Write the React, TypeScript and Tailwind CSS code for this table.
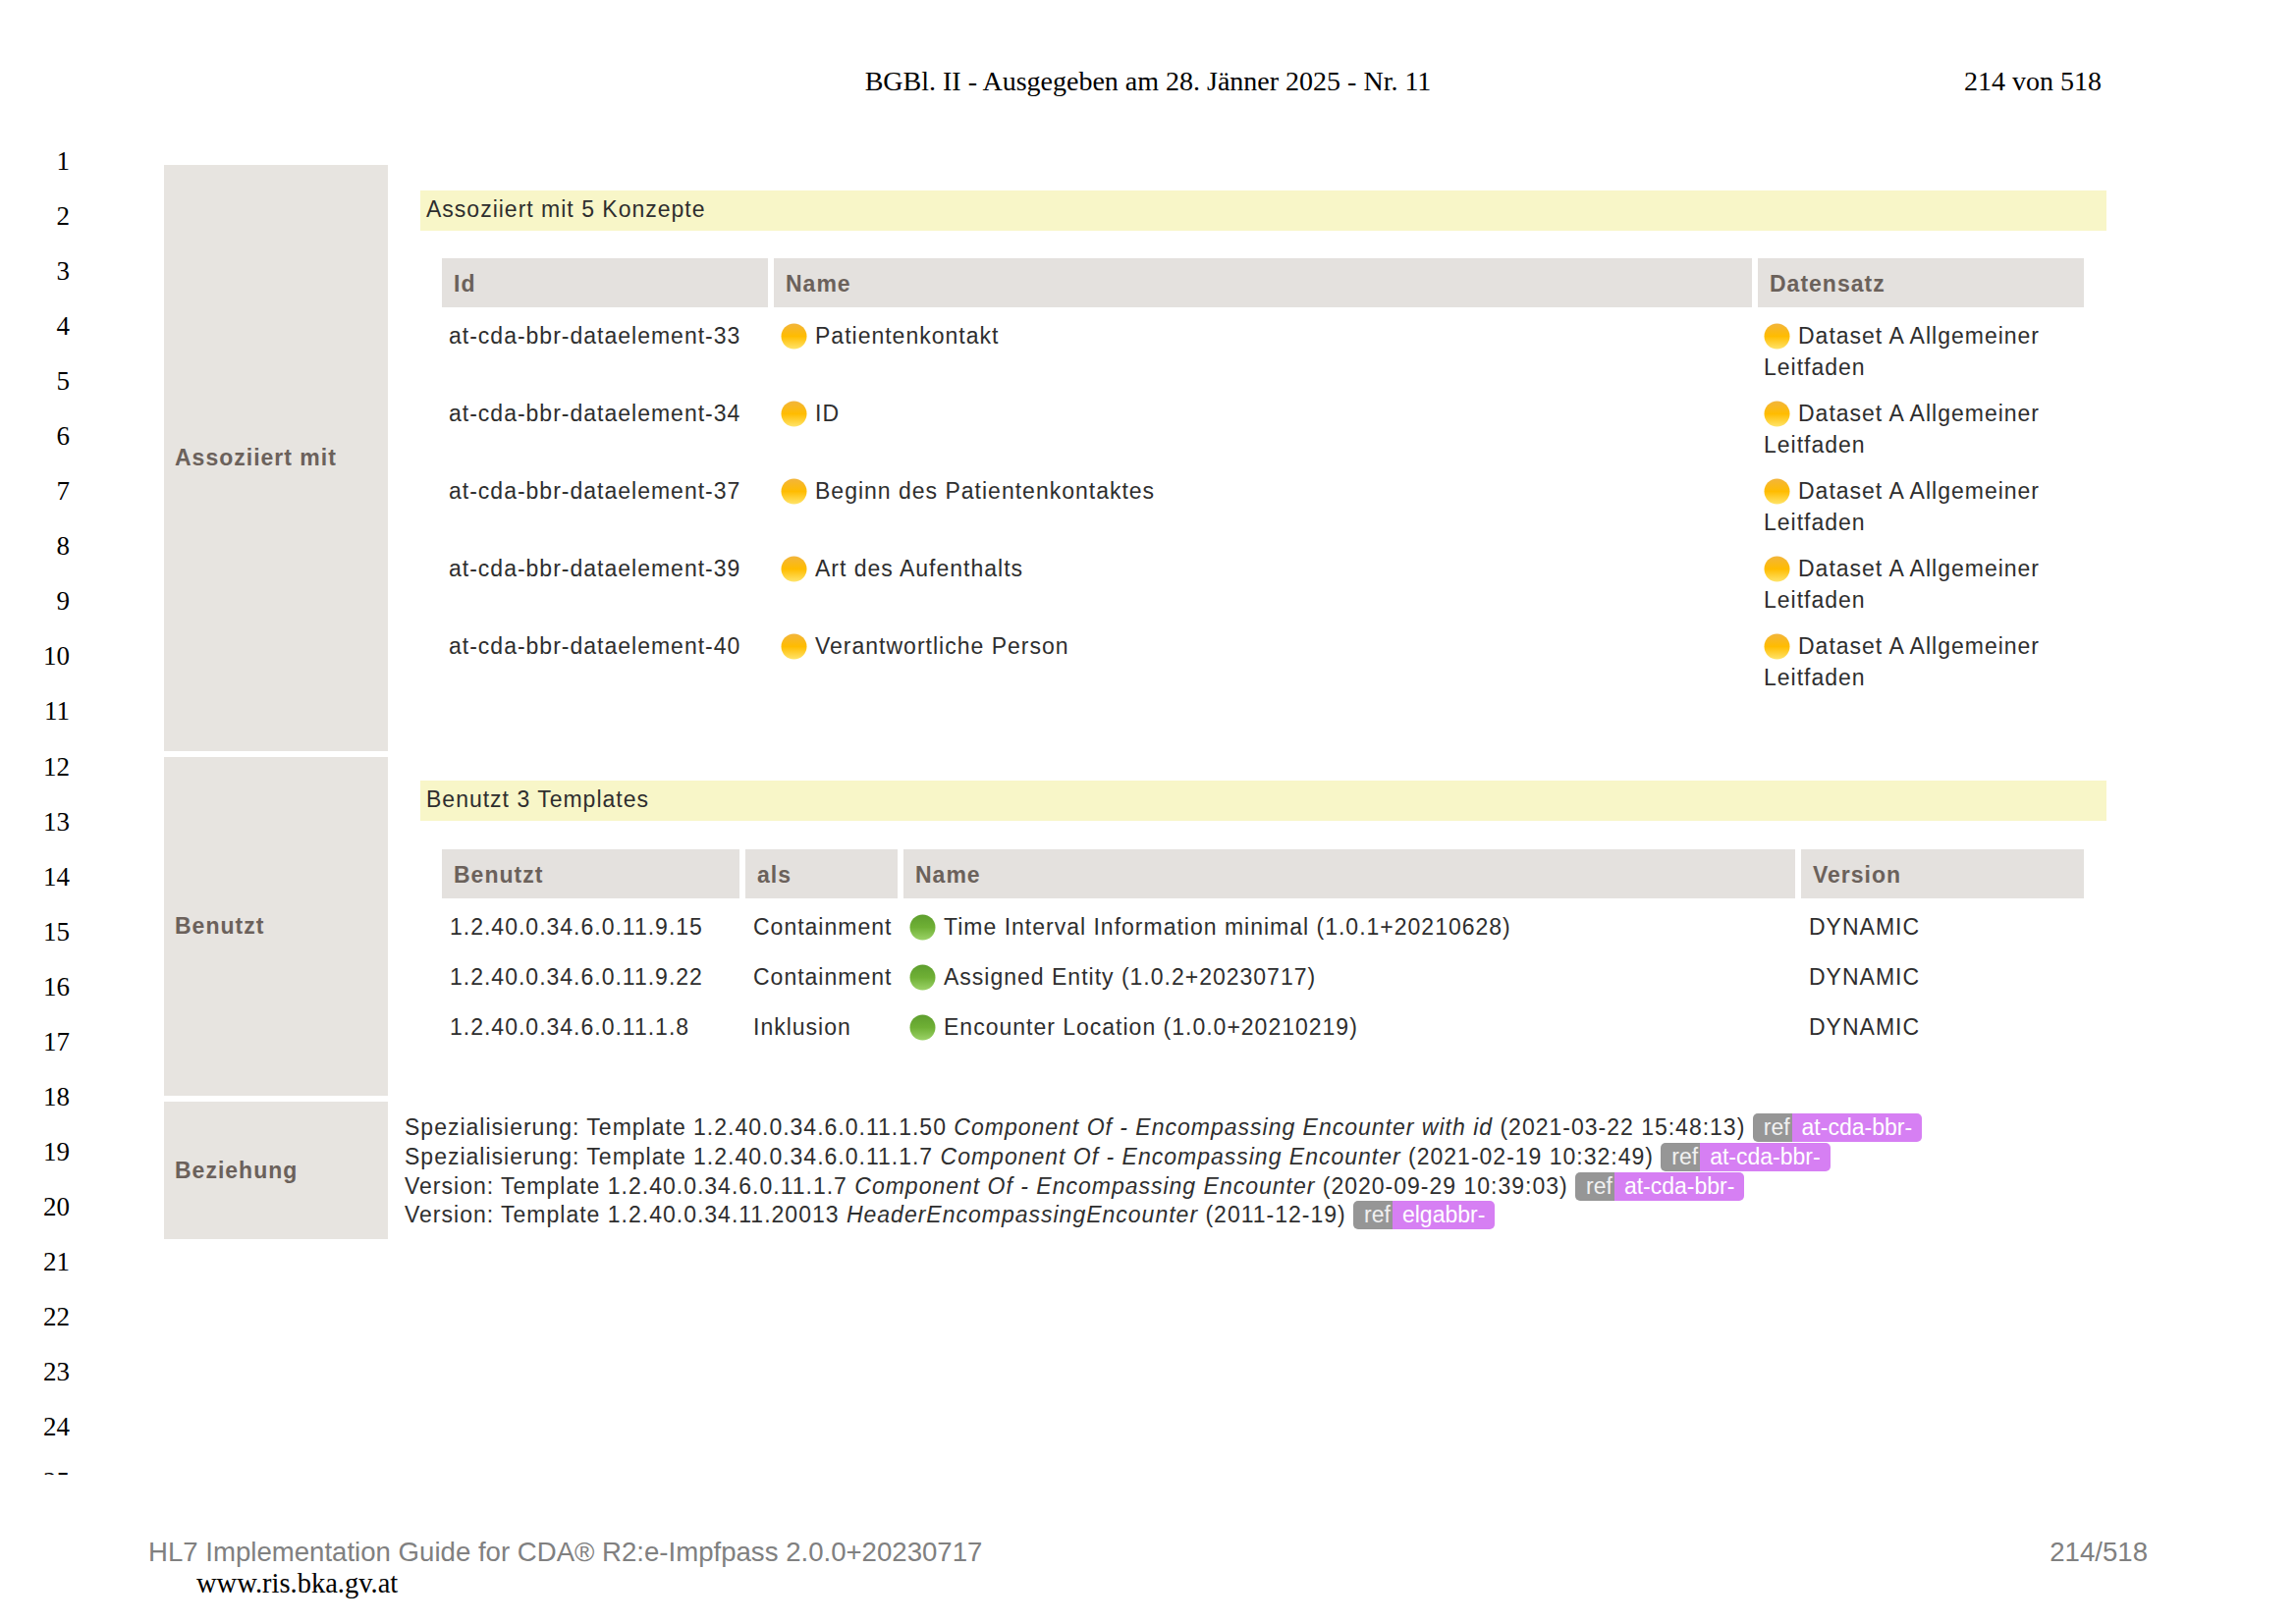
import React from 'react';

const sans = "font-['Liberation_Sans',Arial,sans-serif]";
const serif = "font-['Liberation_Serif','Times_New_Roman',serif]";

const Dot = ({ kind }: { kind: 'yellow' | 'green' }) => {
  const id = kind === 'yellow' ? 'dot-y' : 'dot-g';
  const stops =
    kind === 'yellow'
      ? ['#f2b53c', '#ffbc00', '#ffe46a']
      : ['#5e9e2e', '#6fb035', '#9bd267'];
  return (
    <svg width="27" height="27" viewBox="0 0 27 27" className="inline-block align-middle mr-[8px] -mt-[3px]">
      <defs>
        <linearGradient id={id} x1="0" y1="0" x2="0" y2="1">
          <stop offset="0%" stopColor={stops[0]} />
          <stop offset="50%" stopColor={stops[1]} />
          <stop offset="100%" stopColor={stops[2]} />
        </linearGradient>
      </defs>
      <circle cx="13.5" cy="13.5" r="13" fill={`url(#${id})`} />
    </svg>
  );
};

const Badge = ({ label }: { label: string }) => (
  <span className="inline-flex rounded-[5px] overflow-hidden leading-[29px] tracking-normal text-white">
    <span className="bg-[#969696] pl-[11px] pr-[2px] text-[#f1f1f1]">ref</span>
    <span className="bg-[#d67ff3] px-[10px]">{label}</span>
  </span>
);

const Section = ({ label, children, className }: { label: string; children: React.ReactNode; className: string }) => (
  <div className="flex gap-[6px]">
    <div className="w-[228px] shrink-0 bg-[#e7e4e0] flex items-center pl-[11px] font-bold text-[#6b615b]">{label}</div>
    <div className={`flex-1 pl-[11px] ${className}`}>{children}</div>
  </div>
);

const Bar = ({ text }: { text: string }) => (
  <div className="ml-[16px] mr-[5px] h-[41px] leading-[39px] pl-[6px] bg-[#f8f6c8]">{text}</div>
);

const Th = ({ text }: { text: string }) => (
  <div className="bg-[#e4e1de] h-[50px] leading-[52px] pl-[12px] font-bold text-[#6b615b]">{text}</div>
);

const concepts = [
  ['at-cda-bbr-dataelement-33', 'Patientenkontakt'],
  ['at-cda-bbr-dataelement-34', 'ID'],
  ['at-cda-bbr-dataelement-37', 'Beginn des Patientenkontaktes'],
  ['at-cda-bbr-dataelement-39', 'Art des Aufenthalts'],
  ['at-cda-bbr-dataelement-40', 'Verantwortliche Person'],
];

const templates = [
  ['1.2.40.0.34.6.0.11.9.15', 'Containment', 'Time Interval Information minimal (1.0.1+20210628)'],
  ['1.2.40.0.34.6.0.11.9.22', 'Containment', 'Assigned Entity (1.0.2+20230717)'],
  ['1.2.40.0.34.6.0.11.1.8', 'Inklusion', 'Encounter Location (1.0.0+20210219)'],
];

const relations = [
  ['Spezialisierung: Template 1.2.40.0.34.6.0.11.1.50 ', 'Component Of - Encompassing Encounter with id', ' (2021-03-22 15:48:13) ', 'at-cda-bbr-'],
  ['Spezialisierung: Template 1.2.40.0.34.6.0.11.1.7 ', 'Component Of - Encompassing Encounter', ' (2021-02-19 10:32:49) ', 'at-cda-bbr-'],
  ['Version: Template 1.2.40.0.34.6.0.11.1.7 ', 'Component Of - Encompassing Encounter', ' (2020-09-29 10:39:03) ', 'at-cda-bbr-'],
  ['Version: Template 1.2.40.0.34.11.20013 ', 'HeaderEncompassingEncounter', ' (2011-12-19) ', 'elgabbr-'],
];

export default function App() {
  return (
    <div className="w-[2338px] h-[1653px] bg-white overflow-hidden text-black">
      {/* Kopfzeile */}
      <div className={`grid grid-cols-[1fr_auto_1fr] pt-[68px] text-[28px] leading-[30px] ${serif}`}>
        <div />
        <div>BGBl. II - Ausgegeben am 28. Jänner 2025 - Nr. 11</div>
        <div className="text-right pr-[198px]">214 von 518</div>
      </div>

      <div className="flex mt-[38px]">
        {/* Zeilennummern */}
        <div className={`w-[71px] shrink-0 h-[1366px] overflow-hidden text-right text-[27px] leading-[56.05px] ${serif}`}>
          {Array.from({ length: 25 }, (_, i) => (
            <div key={i}>{i + 1}</div>
          ))}
        </div>

        <div className={`ml-[96px] mt-[32px] w-[1983px] flex flex-col gap-[6px] text-[23px] tracking-[1px] text-[#2e2e2e] ${sans}`}>
          <Section label="Assoziiert mit" className="pt-[26px] pb-[57px]">
            <Bar text="Assoziiert mit 5 Konzepte" />
            <div className="mt-[28px] ml-[38px] grid grid-cols-[332px_996px_332px] gap-[6px]">
              <Th text="Id" />
              <Th text="Name" />
              <Th text="Datensatz" />
              {concepts.map(([id, name]) => (
                <React.Fragment key={id}>
                  <div className="pt-[7px] pb-[2px] pl-[7px] leading-[32px]">{id}</div>
                  <div className="pt-[7px] pb-[2px] pl-[7px] leading-[32px]">
                    <Dot kind="yellow" />
                    {name}
                  </div>
                  <div className="pt-[7px] pb-[2px] pl-[6px] pr-[4px] leading-[32px]">
                    <Dot kind="yellow" />
                    Dataset A Allgemeiner Leitfaden
                  </div>
                </React.Fragment>
              ))}
            </div>
          </Section>

          <Section label="Benutzt" className="pt-[24px] pb-[48px]">
            <Bar text="Benutzt 3 Templates" />
            <div className="mt-[29px] ml-[38px] grid grid-cols-[303px_155px_908px_288px] gap-[6px]">
              <Th text="Benutzt" />
              <Th text="als" />
              <Th text="Name" />
              <Th text="Version" />
              {templates.map(([oid, als, name]) => (
                <React.Fragment key={oid}>
                  <div className="pt-[7px] pb-[6px] pl-[8px] leading-[32px]">{oid}</div>
                  <div className="pt-[7px] pb-[6px] pl-[8px] leading-[32px] whitespace-nowrap">{als}</div>
                  <div className="pt-[7px] pb-[6px] pl-[6px] leading-[32px]">
                    <Dot kind="green" />
                    {name}
                  </div>
                  <div className="pt-[7px] pb-[6px] pl-[8px] leading-[32px]">DYNAMIC</div>
                </React.Fragment>
              ))}
            </div>
          </Section>

          <Section label="Beziehung" className="pt-[12px] pb-[9px] leading-[29.8px]">
            {relations.map(([pre, title, date, ref]) => (
              <div key={pre + title} className="whitespace-nowrap">
                {pre}
                <i>{title}</i>
                {date}
                <Badge label={ref} />
              </div>
            ))}
          </Section>
        </div>
      </div>

      {/* Fußzeile */}
      <div className={`flex justify-between px-[151px] mt-[63px] text-[27.6px] leading-[32px] text-[#808080] ${sans}`}>
        <span>HL7 Implementation Guide for CDA® R2:e-Impfpass 2.0.0+20230717</span>
        <span>214/518</span>
      </div>
      <div className={`pl-[200px] text-[28.5px] leading-[32px] ${serif}`}>www.ris.bka.gv.at</div>
    </div>
  );
}
